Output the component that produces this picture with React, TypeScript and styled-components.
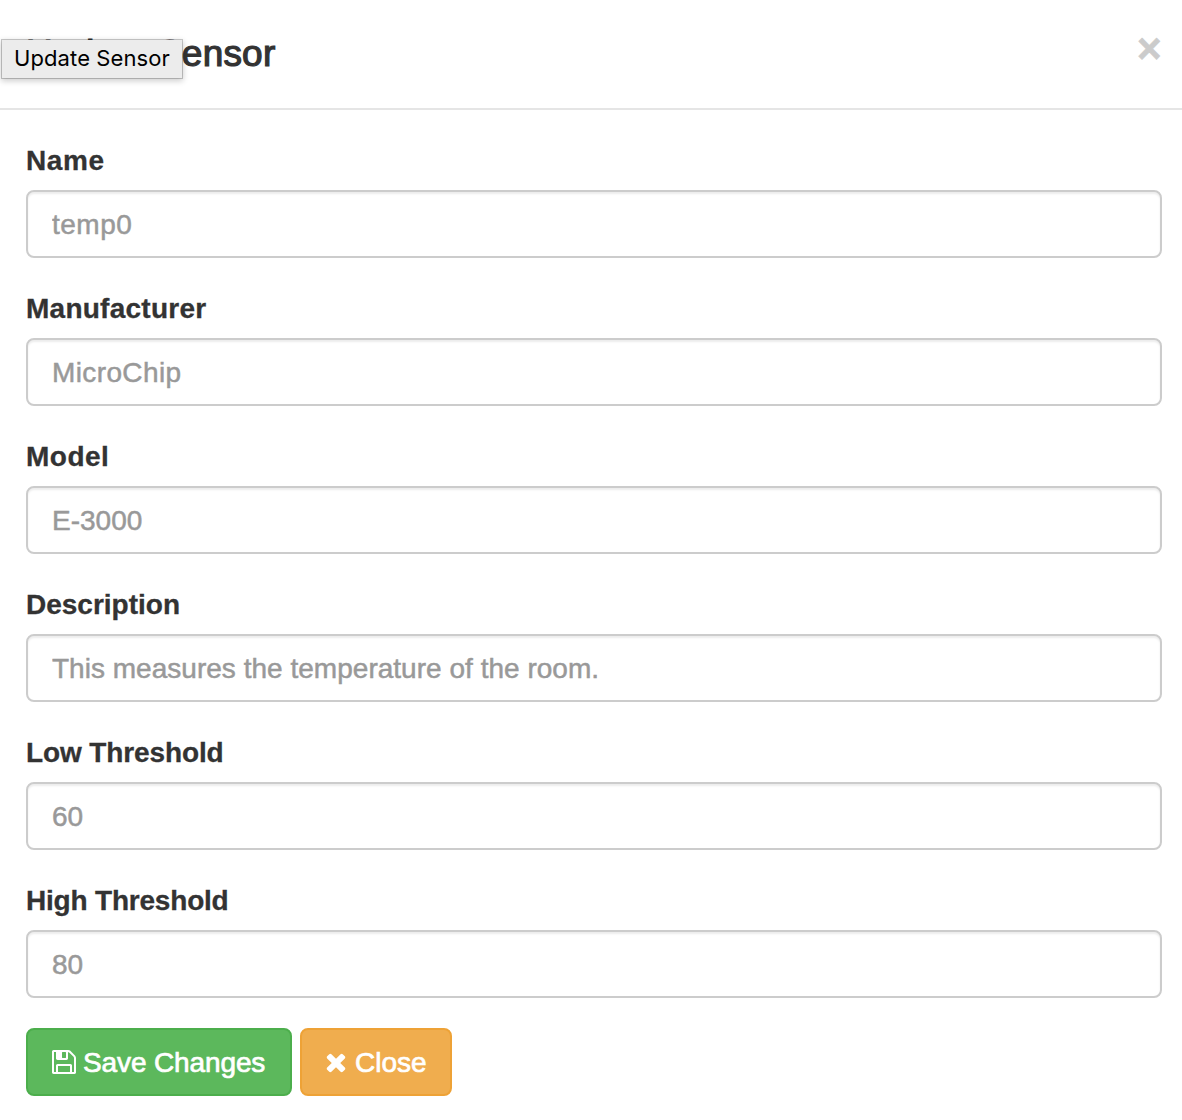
import React from "react";
import styled, { createGlobalStyle } from "styled-components";

const GlobalStyle = createGlobalStyle`
  *, *::before, *::after { box-sizing: border-box; }
  body {
    margin: 0;
    background: #fff;
    color: #333;
    font: 28px/40px "Liberation Sans", Arial, sans-serif;
  }
`;

const Dialog = styled.section`
  position: relative;
  min-height: 1120px;
  background: #fff;
`;

const Header = styled.header`
  display: flex;
  justify-content: space-between;
  align-items: flex-start;
  height: 110px;
  padding: 27px 20.5px 0 26px;
  border-bottom: 2px solid #e5e5e5;
`;

const Title = styled.h4`
  margin: 0;
  font-size: 37px;
  font-weight: 400;
  line-height: 53px;
  letter-spacing: 0.2px;
  -webkit-text-stroke: 1.2px #333;
`;

const Dismiss = styled.button`
  margin-top: 1px;
  border: 0;
  padding: 0;
  background: none;
  color: #000;
  opacity: 0.2;
  font: bold 42px/42px "Liberation Sans", Arial, sans-serif;
  -webkit-text-stroke: 0.8px #000;
`;

const Tooltip = styled.div`
  position: absolute;
  top: 39px;
  left: 1px;
  width: 182px;
  height: 40px;
  padding-left: 12px;
  border: 1px solid #c8c8c8;
  background: #ececec;
  background-clip: padding-box;
  border-color: rgba(0, 0, 0, 0.2);
  box-shadow: 0 2px 6px rgba(0, 0, 0, 0.2);
  color: #000;
  font: 22px/36px Inter, sans-serif;
  letter-spacing: 0.1px;
  white-space: nowrap;
`;

const Form = styled.form`
  display: flex;
  flex-direction: column;
  gap: 30px;
  padding: 30px 20px 24px 26px;
`;

const Field = styled.div`
  display: flex;
  flex-direction: column;
  gap: 10px;
`;

const Label = styled.label<{ $tracking: number }>`
  height: 40px;
  padding-top: 1px;
  font-weight: 700;
  letter-spacing: ${(p) => p.$tracking}px;
  -webkit-text-stroke: 0.3px #333;
`;

const Input = styled.input<{ $tracking: number }>`
  width: 100%;
  height: 68px;
  padding: 13px 24px 11px;
  border: 2px solid #ccc;
  border-radius: 8px;
  background: #fff;
  box-shadow: inset 0 2px 2px rgba(0, 0, 0, 0.075);
  color: #555;
  font: inherit;
  letter-spacing: ${(p) => p.$tracking}px;
  outline: none;
  &::placeholder {
    color: #999;
    opacity: 1;
    -webkit-text-stroke: 0.5px #999;
  }
`;

const Actions = styled.div`
  display: flex;
  gap: 8px;
`;

const Button = styled.button<{ $kind: "success" | "warning" }>`
  display: flex;
  align-items: center;
  gap: 7px;
  width: ${(p) => (p.$kind === "success" ? 266 : 152)}px;
  height: 68px;
  padding: 0 24px;
  border: 2px solid ${(p) => (p.$kind === "success" ? "#4cae4c" : "#eea236")};
  border-radius: 8px;
  background: ${(p) => (p.$kind === "success" ? "#5cb85c" : "#f0ad4e")};
  color: #fff;
  font: inherit;
  letter-spacing: ${(p) => (p.$kind === "success" ? -0.12 : 0)}px;
  -webkit-text-stroke: 0.7px #fff;
  white-space: nowrap;
  svg { flex: none; fill: currentColor; }
`;

const Caption = styled.span`
  padding-top: 2px;
`;

const SaveIcon = () => (
  <svg width="24" height="24" viewBox="128 128 1536 1536" aria-hidden="true">
    <path d="M512 1536h768v-384h-768v384zm896 0h128v-896q0-14-10-38.5t-20-34.5l-281-281q-10-10-34-20t-39-10v416q0 40-28 68t-68 28h-576q-40 0-68-28t-28-68v-416h-128v1280h128v-416q0-40 28-68t68-28h832q40 0 68 28t28 68v416zm-384-928v-320q0-13-9.5-22.5t-22.5-9.5h-192q-13 0-22.5 9.5t-9.5 22.5v320q0 13 9.5 22.5t22.5 9.5h192q13 0 22.5-9.5t9.5-22.5zm640 32v928q0 40-28 68t-68 28h-1344q-40 0-68-28t-28-68v-1344q0-40 28-68t68-28h928q40 0 88 20t76 48l280 280q28 28 48 76t20 88z" />
  </svg>
);

const TimesIcon = () => (
  <svg width="22" height="22" viewBox="256 192 1408 1408" aria-hidden="true">
    <path d="M1490 1322q0 40-28 68l-136 136q-28 28-68 28t-68-28l-294-294-294 294q-28 28-68 28t-68-28l-136-136q-28-28-28-68t28-68l294-294-294-294q-28-28-28-68t28-68l136-136q28-28 68-28t68 28l294 294 294-294q28-28 68-28t68 28l136 136q28 28 28 68t-28 68l-294 294 294 294q28 28 28 68z" />
  </svg>
);

const fields = [
  { id: "name", label: "Name", hint: "temp0", labelTracking: 0.6, hintTracking: 0.5 },
  { id: "manufacturer", label: "Manufacturer", hint: "MicroChip", labelTracking: 0.25, hintTracking: 0.38 },
  { id: "model", label: "Model", hint: "E-3000", labelTracking: 0.5, hintTracking: 0 },
  { id: "description", label: "Description", hint: "This measures the temperature of the room.", labelTracking: 0, hintTracking: 0.02 },
  { id: "low", label: "Low Threshold", hint: "60", labelTracking: -0.12, hintTracking: 0 },
  { id: "high", label: "High Threshold", hint: "80", labelTracking: -0.2, hintTracking: 0 },
];

export default function App() {
  return (
    <>
      <GlobalStyle />
      <Dialog role="dialog" aria-labelledby="title">
        <Header>
          <Title id="title">Update Sensor</Title>
          <Dismiss type="button">×</Dismiss>
        </Header>
        <Form>
          {fields.map((f) => (
            <Field key={f.id}>
              <Label htmlFor={f.id} $tracking={f.labelTracking}>{f.label}</Label>
              <Input id={f.id} placeholder={f.hint} $tracking={f.hintTracking} />
            </Field>
          ))}
          <Actions>
            <Button type="button" $kind="success"><SaveIcon /><Caption>Save Changes</Caption></Button>
            <Button type="button" $kind="warning"><TimesIcon /><Caption>Close</Caption></Button>
          </Actions>
        </Form>
        <Tooltip role="tooltip">Update Sensor</Tooltip>
      </Dialog>
    </>
  );
}
